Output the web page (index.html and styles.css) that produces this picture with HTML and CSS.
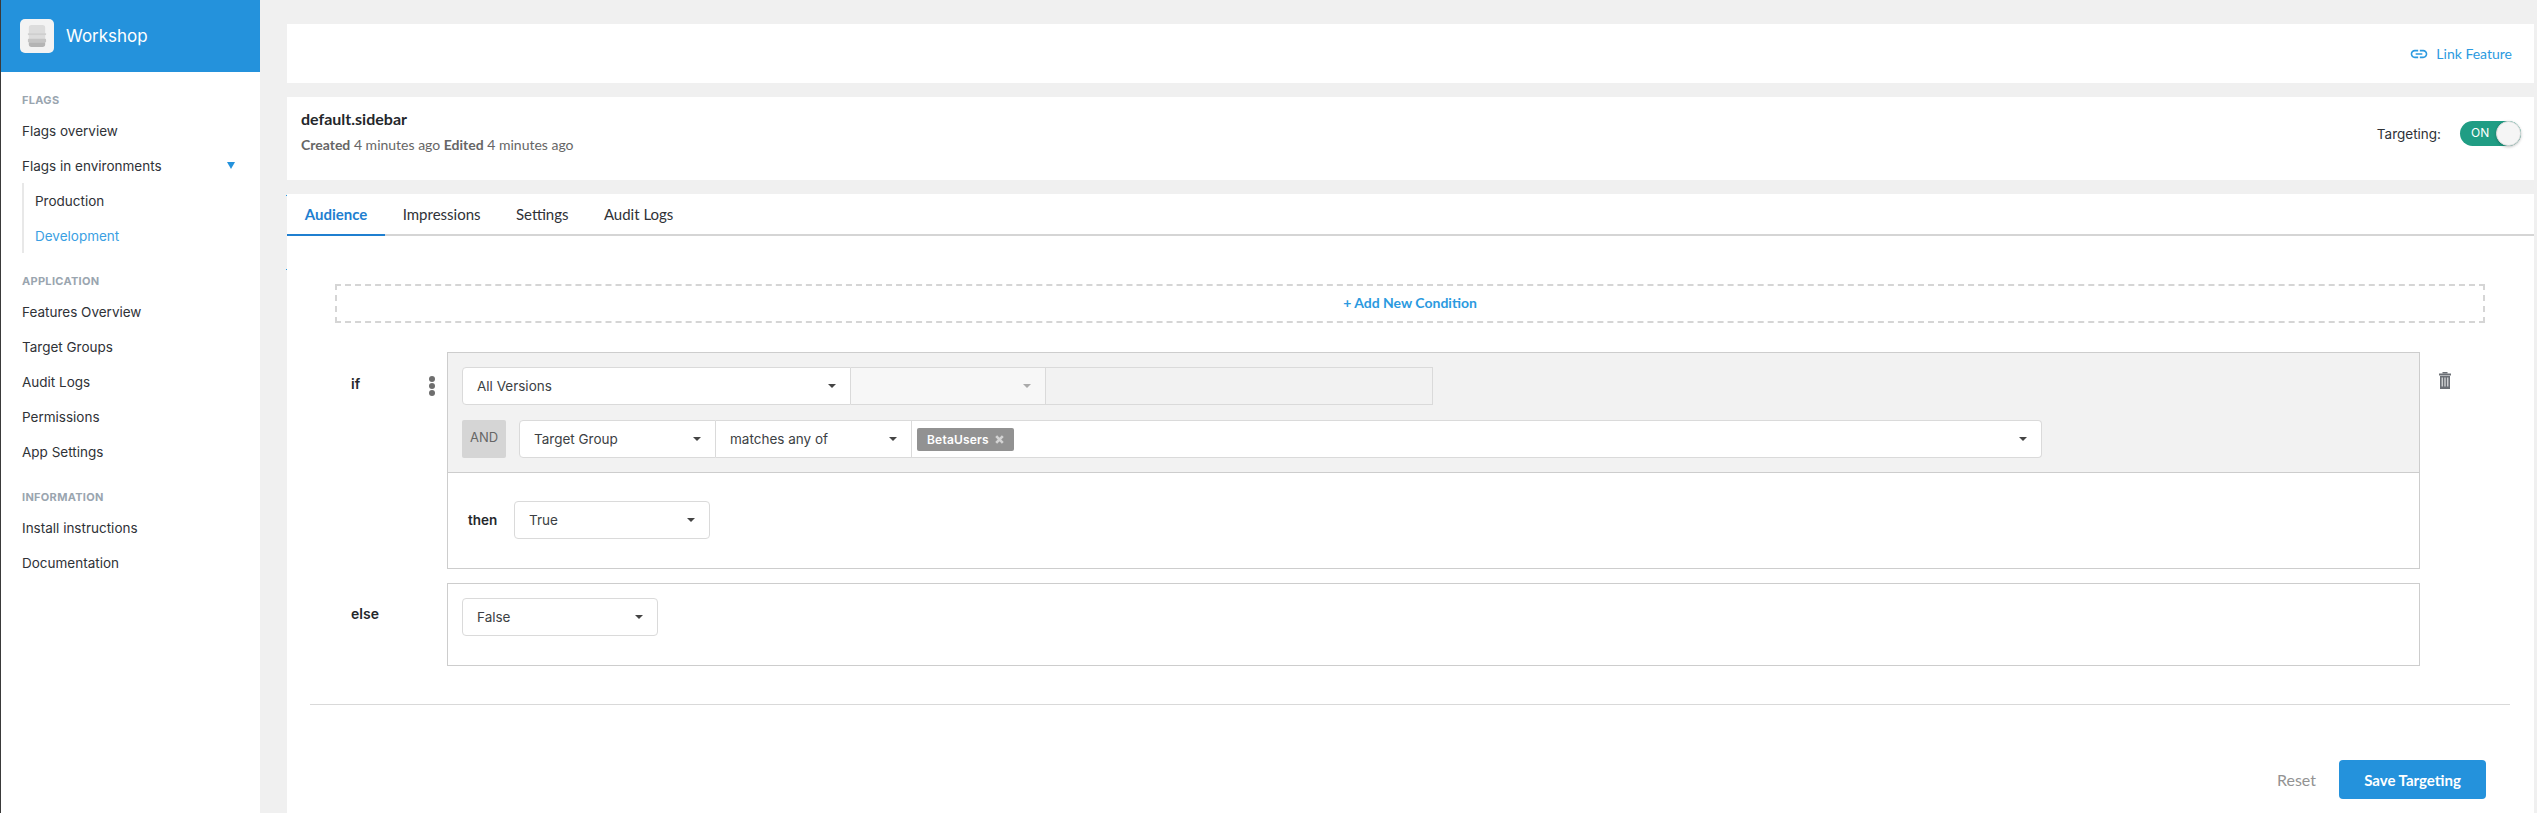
FILE: index.html
```html
<!DOCTYPE html>
<html lang="en">
<head>
<meta charset="utf-8">
<title>Workshop</title>
<link rel="stylesheet" href="styles.css">
</head>
<body>
<aside class="sidebar">
  <header class="brand">
    <div class="brand-logo">
      <svg width="20" height="22" viewBox="0 0 22 24"><path d="M2 3q0-3 3-3h12q3 0 3 3v13H2z" fill="#dcdcdc"/><rect x="1" y="9" width="20" height="2" fill="#cfcfcf"/><rect x="1" y="15" width="20" height="4" rx="1" fill="#c4c4c4"/><path d="M2 19h18v2q0 3-3 3H5q-3 0-3-3z" fill="#b4b4b4"/></svg>
    </div>
    <span class="brand-name">Workshop</span>
  </header>
  <nav class="nav">
    <section class="nav-section">
      <h4 class="nav-label">FLAGS</h4>
      <a class="nav-item">Flags overview</a>
      <a class="nav-item nav-parent">Flags in environments<i class="nav-caret"></i></a>
      <div class="nav-sub">
        <a class="nav-item">Production</a>
        <a class="nav-item nav-active">Development</a>
      </div>
    </section>
    <section class="nav-section">
      <h4 class="nav-label">APPLICATION</h4>
      <a class="nav-item">Features Overview</a>
      <a class="nav-item">Target Groups</a>
      <a class="nav-item">Audit Logs</a>
      <a class="nav-item">Permissions</a>
      <a class="nav-item">App Settings</a>
    </section>
    <section class="nav-section">
      <h4 class="nav-label">INFORMATION</h4>
      <a class="nav-item">Install instructions</a>
      <a class="nav-item">Documentation</a>
    </section>
  </nav>
</aside>
<main class="main">
  <div class="card card-link">
    <a class="link-feature">
      <svg width="20" height="20" viewBox="0 0 24 24" fill="#2b9ae0"><path d="M3.9 12c0-1.71 1.39-3.1 3.1-3.1h4V7H7c-2.76 0-5 2.24-5 5s2.24 5 5 5h4v-1.9H7c-1.71 0-3.1-1.39-3.1-3.1zM8 13h8v-2H8v2zm9-6h-4v1.9h4c1.71 0 3.1 1.39 3.1 3.1s-1.39 3.1-3.1 3.1h-4V17h4c2.76 0 5-2.24 5-5s-2.24-5-5-5z"/></svg>
      Link Feature
    </a>
  </div>
  <div class="card card-title">
    <div class="title-block">
      <h1 class="title">default.sidebar</h1>
      <p class="meta"><b>Created</b> 4 minutes ago <b>Edited</b> 4 minutes ago</p>
    </div>
    <div class="targeting">
      <span class="targeting-label">Targeting:</span>
      <div class="toggle"><span class="toggle-text">ON</span><span class="toggle-knob"></span></div>
    </div>
  </div>
  <div class="panel">
    <div class="tabs">
      <a class="tab tab-active">Audience</a>
      <a class="tab">Impressions</a>
      <a class="tab">Settings</a>
      <a class="tab">Audit Logs</a>
    </div>
    <div class="add-condition">+ Add New Condition</div>
    <div class="rule-row rule-if">
      <div class="rule-label">if</div>
      <div class="rule-dots"><i></i><i></i><i></i></div>
      <div class="rule-box">
        <div class="rule-cond">
          <div class="cond-line">
            <div class="select select-versions"><span>All Versions</span><i class="caret"></i></div>
            <div class="select select-disabled"><i class="caret caret-light"></i></div>
            <div class="input-disabled"></div>
          </div>
          <div class="cond-line">
            <div class="and-tag">AND</div>
            <div class="select select-group"><span>Target Group</span><i class="caret"></i></div>
            <div class="select select-op"><span>matches any of</span><i class="caret"></i></div>
            <div class="select select-multi">
              <span class="tag">BetaUsers
                <svg width="9" height="9" viewBox="0 0 9 9"><path d="M1.2 1.2l6.6 6.6M7.8 1.2L1.2 7.8" stroke="#d4d4d4" stroke-width="2.6"/></svg>
              </span>
              <i class="caret"></i>
            </div>
          </div>
        </div>
        <div class="rule-then">
          <span class="then-label">then</span>
          <div class="select select-value"><span>True</span><i class="caret"></i></div>
        </div>
      </div>
      <svg class="trash" width="12" height="17" viewBox="0 0 12 17"><rect x="3.5" y="0" width="5" height="1.5" fill="#6b6f75"/><rect x="0" y="1.5" width="12" height="2" fill="#6b6f75"/><path d="M1 4h10v13H1z" fill="#6b6f75"/><path d="M2.6 5.5h1.3v9H2.6zM5.35 5.5h1.3v9h-1.3zM8.1 5.5h1.3v9H8.1z" fill="#d6d7d9"/></svg>
    </div>
    <div class="rule-row rule-else">
      <div class="rule-label else-label">else</div>
      <div class="rule-box else-box">
        <div class="select select-value"><span>False</span><i class="caret"></i></div>
      </div>
    </div>
    <hr class="divider">
    <div class="actions">
      <a class="reset">Reset</a>
      <button class="save">Save Targeting</button>
    </div>
  </div>
</main>
</body>
</html>
```

FILE: styles.css
```css
* { box-sizing: border-box; }
html, body { margin: 0; height: 813px; overflow: hidden; }
body {
  display: flex;
  background: #f0f0f0;
  font-family: "Inter", "Liberation Sans", sans-serif;
  font-size: 13.5px;
  color: #2f3237;
}
a { display: block; }
h1, h4, p { margin: 0; }

.sidebar {
  width: 260px;
  flex: none;
  height: 813px;
  background: #fff;
  border-left: 1px solid #3a3a3a;
}
.brand {
  height: 72px;
  background: #2492dc;
  display: flex;
  align-items: center;
  padding-left: 19px;
}
.brand-logo {
  width: 34px;
  height: 34px;
  border-radius: 5px;
  background: #f3f3f3;
  display: flex;
  align-items: center;
  justify-content: center;
}
.brand-name {
  margin-left: 12px;
  font-size: 17px;
  color: #fff;
}
.nav { padding: 17px 0 0 21px; }
.nav-section { margin-bottom: 17px; }
.nav-label {
  height: 24px;
  line-height: 22px;
  font-size: 11px;
  font-weight: 700;
  color: #9aa5af;
  letter-spacing: 0.3px;
}
.nav-item {
  height: 35px;
  line-height: 36px;
  font-size: 13.5px;
  color: #2f3237;
}
.nav-parent {
  display: flex;
  align-items: center;
  justify-content: space-between;
  padding-right: 25px;
}
.nav-caret {
  width: 0;
  height: 0;
  border-left: 4.5px solid transparent;
  border-right: 4.5px solid transparent;
  border-top: 7px solid #2492dc;
}
.nav-sub {
  border-left: 2px solid #e8e8e8;
  padding-left: 11px;
}
.nav-active { color: #3b9fe3; }

.main {
  flex: 1;
  min-width: 0;
  padding: 24px 3px 0 27px;
}
.card {
  background: #fff;
  display: flex;
  justify-content: flex-end;
  align-items: center;
}
.card-link { height: 59px; margin-bottom: 14px; padding-right: 22px; }
.link-feature {
  display: flex;
  align-items: center;
  gap: 7px;
  font-family: "Lato", "Liberation Sans", sans-serif;
  font-size: 14px;
  color: #2b9ae0;
}
.card-title {
  height: 83px;
  margin-bottom: 14px;
  justify-content: space-between;
  align-items: flex-start;
  padding: 11px 13px 0 14px;
  font-family: "Lato", "Liberation Sans", sans-serif;
}
.title { font-size: 16px; font-weight: 700; line-height: 22px; color: #24272b; }
.meta { margin-top: 5px; font-size: 14px; line-height: 20px; color: #666; }
.targeting { display: flex; align-items: center; margin-top: 13px; }
.targeting-label { font-family: "Inter", sans-serif; font-size: 13.5px; color: #2f3237; margin-right: 19px; }
.toggle {
  position: relative;
  width: 61px;
  height: 25px;
  border-radius: 13px;
  background: #209d84;
  color: #fff;
  font-family: "Inter", sans-serif;
  font-size: 12px;
  line-height: 24px;
  padding-left: 11px;
}
.toggle-knob {
  position: absolute;
  right: 0;
  top: 0;
  width: 25px;
  height: 25px;
  border-radius: 50%;
  background: #f5f5f5;
  border: 1px solid #ddd;
  box-shadow: 0 1px 3px rgba(0,0,0,.25);
}

.panel { position: relative; background: #fff; height: 620px; }
.panel::before,
.panel::after {
  content: "";
  position: absolute;
  left: -1px;
  width: 1px;
  height: 1px;
  background: #2b9ae0;
}
.panel::before { top: 1px; }
.panel::after { top: 75px; }
.tabs {
  display: flex;
  height: 42px;
  border-bottom: 2px solid #d5d5d5;
  font-family: "Lato", "Liberation Sans", sans-serif;
  font-size: 15px;
  color: #2f3237;
}
.tab { padding: 0 17.7px; height: 42px; line-height: 41px; }
.tab-active {
  color: #1f7fd0;
  font-weight: 700;
  border-bottom: 2px solid #1f7fd0;
}
.add-condition {
  margin: 48px 49px 0 48px;
  height: 39px;
  border: 2px dashed #d5d5d5;
  text-align: center;
  line-height: 34px;
  font-family: "Lato", "Liberation Sans", sans-serif;
  font-size: 14px;
  font-weight: 700;
  color: #2b9ae0;
}
.rule-row { display: flex; align-items: flex-start; padding-left: 64px; }
.rule-if { margin-top: 29px; }
.rule-label { width: 70px; font-weight: 600; font-size: 14px; color: #24272b; padding-top: 23px; }
.rule-dots { display: flex; flex-direction: column; gap: 1px; width: 26px; padding: 24px 0 0 8px; height: 46px; }
.rule-dots i { width: 6px; height: 6px; border-radius: 50%; background: #6e6e6e; }
.rule-box {
  width: 1973px;
  border: 1px solid #cdcdcd;
  flex: none;
}
.rule-cond {
  background: #f2f2f2;
  border-bottom: 1px solid #cdcdcd;
  padding: 14px;
  display: flex;
  flex-direction: column;
  gap: 15px;
}
.cond-line { display: flex; align-items: stretch; height: 38px; }
.select {
  background: #fff;
  border: 1px solid #dadada;
  display: flex;
  align-items: center;
  justify-content: space-between;
  padding: 0 14px;
  height: 38px;
  font-size: 13.5px;
  color: #3c3f44;
}
.caret {
  width: 0;
  height: 0;
  flex: none;
  border-left: 4px solid transparent;
  border-right: 4px solid transparent;
  border-top: 4px solid #444;
}
.caret-light { border-top-color: #aaa; }
.select-versions { width: 389px; border-radius: 4px 0 0 4px; border-right: 1px solid #dadada; }
.select-disabled {
  width: 195px;
  background: #f7f7f7;
  border-left: 0;
  justify-content: flex-end;
}
.input-disabled {
  width: 387px;
  border: 1px solid #dadada;
  border-left: 0;
  background: #f2f2f2;
}
.and-tag {
  width: 44px;
  background: #d5d5d5;
  border-radius: 2px;
  color: #666;
  font-size: 13px;
  text-align: center;
  line-height: 34px;
  margin-right: 13px;
}
.select-group { width: 197px; border-radius: 4px 0 0 4px; }
.select-op { width: 196px; border-left: 0; }
.select-multi { flex: 1; max-width: 1130px; border-left: 0; border-radius: 0 4px 4px 0; padding: 0 14px 0 5px; }
.tag {
  display: flex;
  align-items: center;
  gap: 6px;
  height: 23px;
  padding: 0 10px;
  background: #929292;
  border-radius: 2px;
  color: #fff;
  font-size: 12px;
  font-weight: 600;
  letter-spacing: 0.2px;
}
.rule-then {
  display: flex;
  align-items: center;
  height: 95px;
  padding: 0 0 2px 20px;
}
.then-label { width: 46px; font-weight: 600; color: #24272b; }
.select-value { width: 196px; border-radius: 4px; }
.trash { margin: 20px 0 0 19px; }
.rule-else { margin-top: 14px; }
.else-label { width: 96px; padding-top: 22px; }
.else-box { height: 83px; padding: 14px; }
.divider {
  margin: 38px 24px 0 23px;
  border: 0;
  border-top: 1px solid #d9d9d9;
}
.actions {
  display: flex;
  align-items: center;
  justify-content: flex-end;
  margin-top: 55px;
  padding-right: 48px;
  font-family: "Lato", "Liberation Sans", sans-serif;
}
.reset { font-size: 16px; color: #939393; margin-right: 23px; }
.save {
  width: 147px;
  height: 39px;
  background: #2492dc;
  border: 0;
  border-radius: 4px;
  color: #fff;
  font-family: "Lato", "Liberation Sans", sans-serif;
  font-size: 15px;
  font-weight: 700;
}
```
